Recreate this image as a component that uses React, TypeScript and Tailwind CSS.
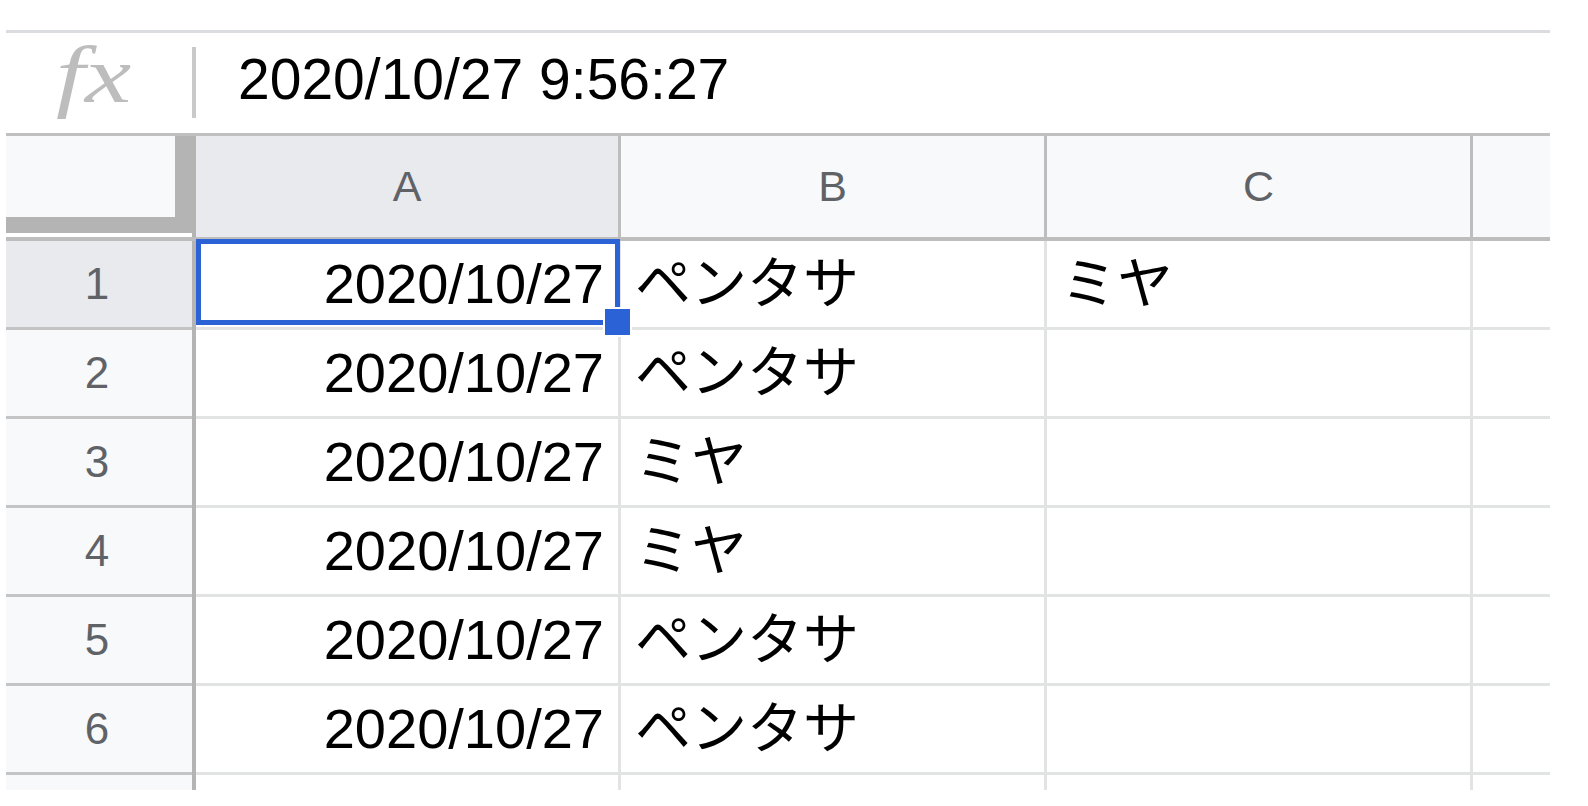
import React from 'react';

type Row = { n: number; a: string; b: string; c: string };

const rows: Row[] = [
  { n: 1, a: '2020/10/27', b: 'ペンタサ', c: 'ミヤ' },
  { n: 2, a: '2020/10/27', b: 'ペンタサ', c: '' },
  { n: 3, a: '2020/10/27', b: 'ミヤ', c: '' },
  { n: 4, a: '2020/10/27', b: 'ミヤ', c: '' },
  { n: 5, a: '2020/10/27', b: 'ペンタサ', c: '' },
  { n: 6, a: '2020/10/27', b: 'ペンタサ', c: '' },
];

const columns = ['A', 'B', 'C'];

const App: React.FC = () => {
  return (
    <div className="min-h-screen bg-white pt-[30px] pl-[6px] font-['Liberation_Sans','Noto_Sans_CJK_JP',sans-serif] text-black">
      <div className="w-[1544px]">
        {/* Formula bar */}
        <div className="flex h-[106px] items-start border-t-[3px] border-b-[3px] border-t-[#dadce0] border-b-[#c0c0c0]">
          <div className="w-[186px] pl-[50px]">
            <span className="mt-[2px] block origin-left scale-x-[1.3] font-['Liberation_Serif',serif] text-[80px] italic leading-none text-[#bdbdbd]">
              fx
            </span>
          </div>
          <div className="mt-[14px] h-[71px] w-[4px] bg-[#c9c9c9]" />
          <div className="ml-[42px] mt-[18px] text-[57px] leading-none">2020/10/27 9:56:27</div>
        </div>

        {/* Column headers */}
        <div className="flex h-[105px] border-b-[4px] border-[#bdbdbd]">
          <div className="flex w-[186px] flex-col">
            <div className="h-[97px] border-r-[17px] border-b-[16px] border-[#b4b4b4] bg-[#f8f9fa]" />
            <div className="h-[4px] bg-white" />
          </div>
          <div className="w-[4px] bg-[#b4b4b4]" />
          {columns.map((col, i) => (
            <div
              key={col}
              className={`flex items-center justify-center border-r-[3px] border-[#bdbdbd] text-[43px] leading-none text-[#5f6368] ${
                i === 0 ? 'w-[425px] bg-[#e8eaed]' : 'w-[426px] bg-[#f8f9fa]'
              }`}
            >
              {col}
            </div>
          ))}
          <div className="flex-1 bg-[#f8f9fa]" />
        </div>

        {/* Rows */}
        {rows.map((row) => (
          <div key={row.n} className="flex h-[89px]">
            <div
              className={`flex w-[186px] items-center justify-center border-b-[3px] border-[#c4c4c4] pr-[4px] text-[44px] leading-none text-[#5f6368] ${
                row.n === 1 ? 'bg-[#e8eaed]' : 'bg-[#f8f9fa]'
              }`}
            >
              {row.n}
            </div>
            <div className="w-[4px] bg-[#b4b4b4]" />
            <div className="relative flex w-[425px] items-center justify-end border-r-[3px] border-b-[3px] border-[#e2e3e3] pr-[14px] text-[56px] leading-none">
              {row.a}
              {row.n === 1 && (
                <>
                  <div className="absolute left-0 top-[-2px] h-[86px] w-[424px] border-[5px] border-[#2b63d6]" />
                  <div className="absolute left-[407px] top-[66px] z-10 h-[30px] w-[29px] border-[2px] border-white bg-[#2b63d6]" />
                </>
              )}
            </div>
            <div className="flex w-[426px] items-center border-r-[3px] border-b-[3px] border-[#e2e3e3] pl-[14px] text-[56px] leading-none">
              {row.b}
            </div>
            <div className="flex w-[426px] items-center border-r-[3px] border-b-[3px] border-[#e2e3e3] pl-[14px] text-[56px] leading-none">
              {row.c}
            </div>
            <div className="flex-1 border-b-[3px] border-[#e2e3e3]" />
          </div>
        ))}

        {/* Partial row 7 */}
        <div className="flex h-[15px]">
          <div className="w-[186px] bg-[#f8f9fa]" />
          <div className="w-[4px] bg-[#b4b4b4]" />
          <div className="w-[425px] border-r-[3px] border-[#e2e3e3]" />
          <div className="w-[426px] border-r-[3px] border-[#e2e3e3]" />
          <div className="w-[426px] border-r-[3px] border-[#e2e3e3]" />
          <div className="flex-1" />
        </div>
      </div>
    </div>
  );
};

export default App;
